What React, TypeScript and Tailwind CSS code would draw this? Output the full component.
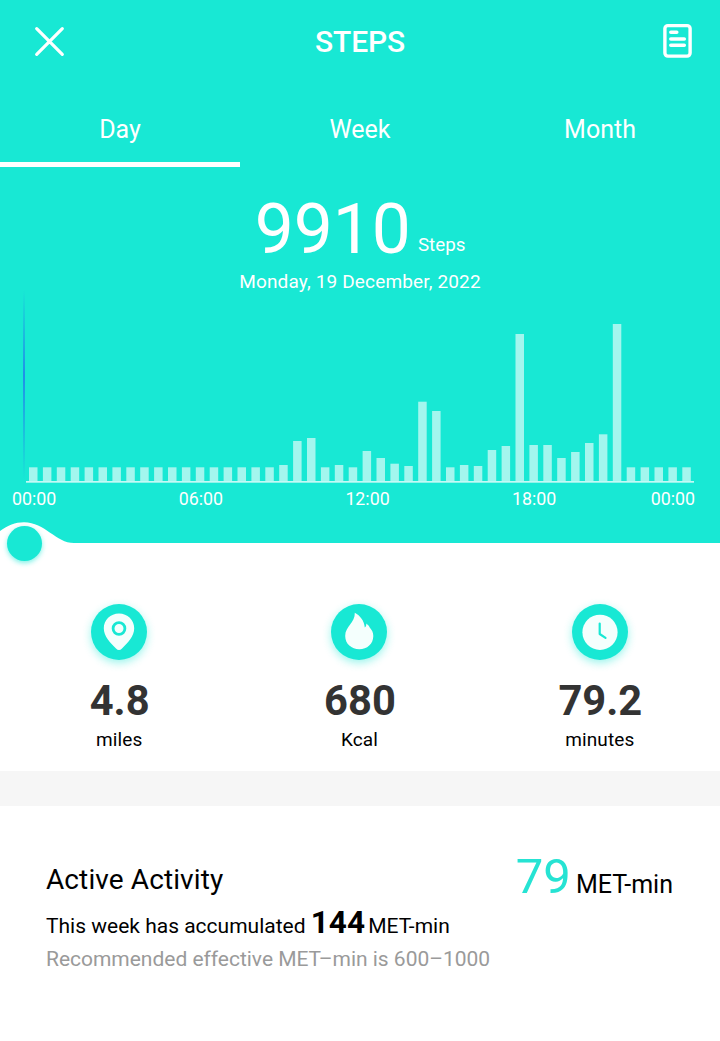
const tabs = ["Day", "Week", "Month"];

const axisLabels = ["00:00", "06:00", "12:00", "18:00", "00:00"];

// Bar heights, one for each half hour
const bars = [
  13.7, 13.7, 13.7, 13.7, 13.7, 13.7, 13.7, 13.7, 13.7, 13.7, 13.7, 13.7, 13.7,
  13.7, 13.7, 13.7, 13.7, 13.7, 16, 40, 43, 13.7, 16, 13.7, 30, 23, 17.3, 15,
  79.3, 70, 13.7, 16, 15, 31, 35, 147, 36, 36, 23, 29, 38, 46.7, 157, 13.7,
  13.7, 13.7, 13.7, 13.7,
];

function PinIcon() {
  return (
    <svg className="w-14 h-14" viewBox="0 0 56 56" fill="none">
      <path
        d="M28 9.500c-8.600 0-15.200 6.500-15.200 14.700 0 8.300 6.400 14.300 12.200 20.200 2 2 4 2 6 0 5.800-5.900 12.200-11.900 12.200-20.200C43.200 16 36.600 9.500 28 9.500Z"
        fill="#f4fffd"
      />
      <circle cx="28" cy="24.500" r="5.900" stroke="#18e8d4" strokeWidth="2.800" />
    </svg>
  );
}

function FlameIcon() {
  return (
    <svg className="w-14 h-14" viewBox="0 0 56 56" fill="none">
      <path
        d="M23.800 8.800c5.400 3 9.400 8 10 14.600 1.200-.8 1.600-2 1.500-4 1.500 1.200 2.700 2.400 3.400 4 2.200 2.600 3.600 4.600 3.600 8.600 0 8-6.200 13.200-14 13.200s-14.100-5.300-14.100-13.200c0-9.600 10-12.900 9.600-23.200Z"
        fill="#f4fffd"
      />
    </svg>
  );
}

function ClockIcon() {
  return (
    <svg className="w-14 h-14" viewBox="0 0 56 56" fill="none">
      <circle cx="28" cy="28.300" r="17.600" fill="#f4fffd" />
      <path
        d="M27.700 19.500v10.500l5.800 3.800"
        stroke="#18e8d4"
        strokeWidth="2.200"
        strokeLinecap="round"
        strokeLinejoin="round"
      />
    </svg>
  );
}

const stats = [
  { icon: <PinIcon />, value: "4.8", unit: "miles" },
  { icon: <FlameIcon />, value: "680", unit: "Kcal" },
  { icon: <ClockIcon />, value: "79.2", unit: "minutes" },
];

function Chart() {
  return (
    <svg className="block w-full h-[193px]" viewBox="0 0 720 193">
      <defs>
        <linearGradient id="marker" x1="0" y1="0" x2="0" y2="1">
          <stop offset="0" stopColor="#2090e8" stopOpacity="0" />
          <stop offset="0.450" stopColor="#2090e8" />
          <stop offset="1" stopColor="#2090e8" stopOpacity="0" />
        </linearGradient>
      </defs>
      <rect x="23" y="0" width="2" height="190" fill="url(#marker)" />
      {bars.map((height, i) => (
        <rect
          key={i}
          x={29 + i * 13.9}
          y={191 - height}
          width="8.500"
          height={height}
          fill="#a3f6ee"
        />
      ))}
      <rect x="26" y="191" width="668" height="1.700" fill="#c4faf5" />
    </svg>
  );
}

export default function App() {
  return (
    <main className="w-[720px] h-[1041px] bg-white text-black overflow-hidden font-['Roboto',sans-serif]">
      {/* Teal panel */}
      <section className="h-[543px] bg-[#18e8d4] text-white">
        <header className="h-[83px] pl-[34px] pr-[26px] grid grid-cols-[40px_1fr_32px] items-center">
          <svg className="w-8 h-8" viewBox="0 0 32 32" fill="none">
            <path
              d="M2.700 2.700 28.300 28.300M28.300 2.700 2.700 28.300"
              stroke="white"
              strokeWidth="3.200"
              strokeLinecap="round"
            />
          </svg>
          <h1 className="text-[30px] leading-9 font-medium text-center -ml-4 tracking-[-0.1px]">
            STEPS
          </h1>
          <svg className="w-8 h-9 -mt-0.5" viewBox="0 0 32 36" fill="none">
            <rect
              x="2.900"
              y="2.600"
              width="25.200"
              height="30.500"
              rx="3"
              stroke="white"
              strokeWidth="3.400"
            />
            <path
              d="M8.800 9.300h6M8.800 16h13.500M8.800 22.300h13.500"
              stroke="white"
              strokeWidth="3.500"
              strokeLinecap="round"
            />
          </svg>
        </header>
        {/* Tabs */}
        <nav className="grid grid-cols-3 text-center text-[25px]">
          {tabs.map((tab, i) => (
            <button
              key={tab}
              className={
                i === 0
                  ? "h-[84px] pt-[15px] leading-9 border-b-5 border-white"
                  : "h-[84px] pt-[15px] leading-9 border-b-5 border-transparent"
              }
            >
              {tab}
            </button>
          ))}
        </nav>
        {/* Total */}
        <div className="h-[101px] pt-[27px]">
          <div className="flex justify-center items-baseline gap-[7px] leading-[72px]">
            <span className="text-[69.5px]">9910</span>
            <span className="text-[18.8px] relative -top-0.5">Steps</span>
          </div>
        </div>
        <p className="h-7 leading-7 text-center text-[19px] tracking-[0.15px]">
          Monday, 19 December, 2022
        </p>
        <div className="-mt-1.5">
          <Chart />
        </div>
        <div className="pl-3 pr-[25px] pt-0.5 flex text-[17.8px] leading-7">
          {axisLabels.map((label, i) => (
            <span key={i} className="w-[166.7px] shrink-0 last:w-auto last:-ml-[28px]">
              {label}
            </span>
          ))}
        </div>
      </section>
      {/* Wave and drag handle, lifted over the edge of the teal panel */}
      <div className="h-[228px] flex flex-col">
        <div className="h-9 -mt-[22px] relative">
          <svg className="block w-20 h-[22px]" viewBox="0 0 80 22">
            <path
              d="M0 10C8 4 15 1.200 24 1.200c21 0 32 20.800 50 20.800H0Z"
              fill="white"
            />
          </svg>
          <div className="absolute left-[7px] top-[5px] size-[35px] rounded-full bg-[#18e8d4] shadow-[0_2px_5px_#18e8d490]" />
        </div>
        {/* Stats */}
        <div className="pt-[47px] -ml-px grid grid-cols-3">
          {stats.map((stat) => (
            <div key={stat.unit} className="flex flex-col items-center">
              <div className="size-14 rounded-full bg-[#18e8d4] shadow-[0_3px_8px_#18e8d470]">
                {stat.icon}
              </div>
              <span className="mt-4 pl-px text-[41.7px] leading-[50px] font-bold text-[#333333]">
                {stat.value}
              </span>
              <span className="text-[19px] leading-7 tracking-[0.1px]">
                {stat.unit}
              </span>
            </div>
          ))}
        </div>
      </div>
      <div className="h-[35px] bg-[#f6f6f6]" />
      {/* Active activity */}
      <section className="pt-[41px] pl-[46px] pr-[47px]">
        <div className="h-[58px] flex justify-between items-baseline leading-[60px]">
          <h2 className="text-[28px] tracking-[0.1px] relative -top-1">
            Active Activity
          </h2>
          <p className="text-[25px]">
            <span className="text-[49px] text-[#26e3d3] -mr-px">79</span>{" "}
            MET-min
          </p>
        </div>
        <p className="text-[21px] leading-9 h-[38px]">
          This week has accumulated{" "}
          <span className="text-[31.5px] font-bold -mr-0.5">144</span>{" "}
          MET-min
        </p>
        <p className="text-[21px] leading-8 text-[#9a9a9a] tracking-[-0.02px]">
          Recommended effective MET–min is 600–1000
        </p>
      </section>
    </main>
  );
}
